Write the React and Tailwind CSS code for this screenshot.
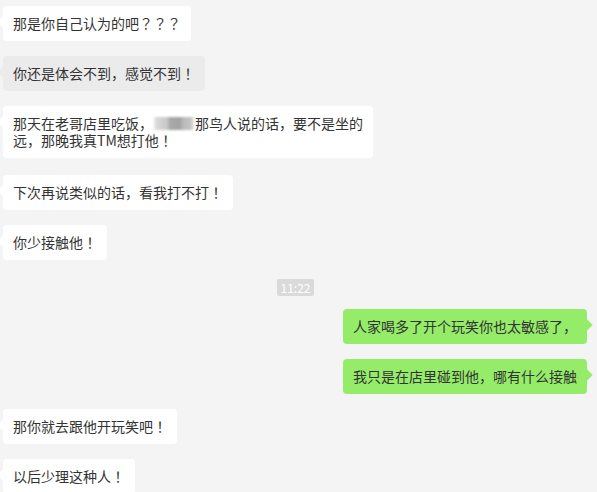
const font = {
  fontFamily: '"Microsoft YaHei", "Noto Sans CJK SC", "Noto Sans", sans-serif',
};

const messages = [
  { side: "left", text: "那是你自己认为的吧？？？" },
  { side: "left", text: "你还是体会不到，感觉不到！", active: true },
  { side: "left", blurred: true },
  { side: "left", text: "下次再说类似的话，看我打不打！", gapTop: "mt-[17px]" },
  { side: "left", text: "你少接触他！" },
  { side: "time", text: "11:22" },
  { side: "right", text: "人家喝多了开个玩笑你也太敏感了，" },
  { side: "right", text: "我只是在店里碰到他，哪有什么接触" },
  { side: "left", text: "那你就去跟他开玩笑吧！" },
  { side: "left", text: "以后少理这种人！" },
];

// Full-width ！ and ？ sit centred in their cell, as the JP forms do
function Punct({ text }) {
  return text.split(/([！？])/).map((part, i) =>
    part === "！" || part === "？" ? (
      <span key={i} style={{ fontFamily: '"Noto Sans CJK JP", sans-serif' }}>
        {part}
      </span>
    ) : (
      part
    )
  );
}

// Smudged name in the third message
function Blur() {
  return (
    <span className="inline-block h-[13px] w-[42px] align-[-1px] bg-[linear-gradient(90deg,transparent_0px,#d9d9d9_3px,#c9c9c9_14px,#a8a8a8_17px,#a3a3a3_27px,#bababa_30px,#c4c4c4_38px,transparent_42px)] blur-[1px]" />
  );
}

function Bubble({ msg }) {
  const right = msg.side === "right";
  const bg = right ? "bg-[#95ec69]" : msg.active ? "bg-[#ebebeb]" : "bg-white";
  return (
    <div className={`flex ${right ? "justify-end pr-[10px]" : "pl-[3px]"}`}>
      <div
        className={`relative max-w-[370px] rounded-[4px] px-[10px] py-[9px] text-[14px] leading-[17px] text-[#333] ${bg}`}
      >
        <span
          className={`absolute top-[12px] h-[8px] w-[8px] rotate-45 ${bg} ${
            right ? "right-[-4px]" : "left-[-4px]"
          }`}
        />
        <span className="relative">
          {msg.blurred ? (
            <>
              那天在老哥店里吃饭，
              <Blur />
              那鸟人说的话，要不是坐的
              <br />
              远，那晚我真TM想打他<Punct text="！" />
            </>
          ) : (
            <Punct text={msg.text} />
          )}
        </span>
      </div>
    </div>
  );
}

export default function App() {
  return (
    <div className="h-[492px] w-full overflow-hidden bg-[#f4f4f4] pt-[6px]" style={font}>
      <div className="flex flex-col">
        {messages.map((m, i) => {
          if (m.side === "time") {
            return (
              <div key={i} className="mt-[19px] mb-[13px] flex justify-center pr-[6px]">
                <span className="rounded-[2px] bg-[#dadada] px-[4px] text-[12px] leading-[17px] text-white">
                  {m.text}
                </span>
              </div>
            );
          }
          const prevTime = i > 0 && messages[i - 1].side === "time";
          const gap = i === 0 || prevTime ? "" : m.gapTop || "mt-[15px]";
          return (
            <div key={i} className={gap}>
              <Bubble msg={m} />
            </div>
          );
        })}
      </div>
    </div>
  );
}
